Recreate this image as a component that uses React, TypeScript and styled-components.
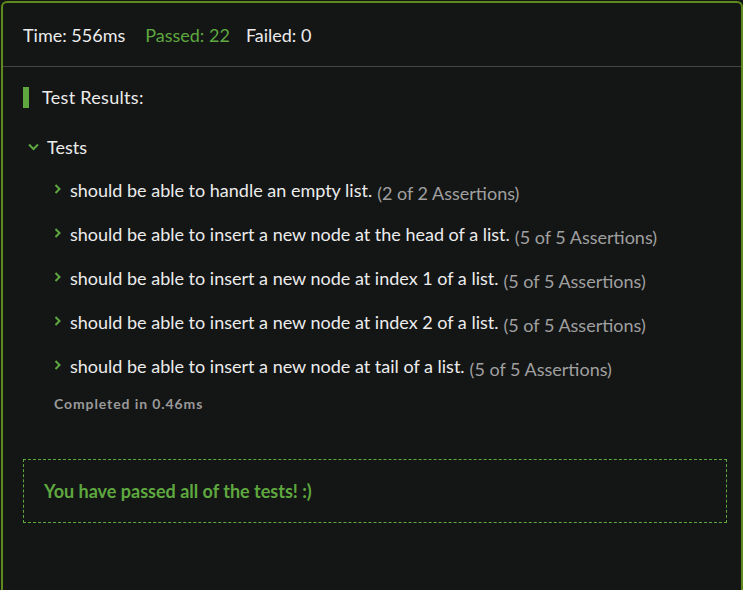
import React from "react";
import styled, { createGlobalStyle } from "styled-components";

const Global = createGlobalStyle`
  html, body { margin: 0; padding: 0; background: #141515; }
  body { font-family: Lato, "Noto Sans", sans-serif; color: #e8e8e8; }
`;

const Panel = styled.div`
  box-sizing: border-box;
  margin: 1px 0 0 1px;
  width: 742px;
  height: calc(100vh - 1px);
  overflow: hidden;
  border: 2px solid #5e8a1c;
  border-bottom: 0;
  border-radius: 6px 6px 0 0;
  background: #141515;
`;

const StatsBar = styled.div`
  display: flex;
  align-items: center;
  height: 63px;
  padding: 0 20px;
  border-bottom: 1px solid #454545;
  font-size: 18px;
`;

const Stat = styled.span<{ $pass?: boolean; $gap: number }>`
  color: ${(p) => (p.$pass ? "#5ea83f" : "#ececec")};
  margin-right: ${(p) => p.$gap}px;
`;

const Body = styled.div`
  padding: 19px 14px 0 20px;
`;

const Heading = styled.div`
  display: flex;
  align-items: center;
  gap: 13px;
  height: 22px;
  line-height: 22px;
  font-size: 18px;
  color: #ececec;
  letter-spacing: 0.3px;
`;

const Bar = styled.span`
  width: 6px;
  height: 21px;
  background: #5ea83f;
`;

const Group = styled.div`
  display: flex;
  align-items: center;
  gap: 8px;
  height: 22px;
  line-height: 22px;
  margin: 28px 0 0 5px;
  font-size: 18px;
  color: #ececec;
`;

const List = styled.ul`
  list-style: none;
  margin: 10px 0 0;
  padding: 0 0 0 31px;
`;

const Item = styled.li`
  display: flex;
  align-items: center;
  gap: 8px;
  height: 44px;
  font-size: 18px;
  color: #ececec;
`;

const Count = styled.span`
  color: #a0a0a0;
  margin-left: 5px;
  position: relative;
  top: 3px;
`;

const Completed = styled.div`
  margin: 7px 0 0 31px;
  font-size: 14px;
  line-height: 17px;
  font-weight: 700;
  color: #9a9a9a;
  letter-spacing: 0.9px;
`;

const Banner = styled.div`
  box-sizing: border-box;
  margin-top: 47px;
  height: 64px;
  display: flex;
  align-items: center;
  padding-left: 20px;
  border: 1px dashed #5ea83f;
  font-size: 18px;
  font-weight: 700;
  color: #5ea83f;
`;

const ChevronDown = () => (
  <svg width="11" height="8" viewBox="0 0 11 8">
    <path d="M1 1.5 L5.5 6 L10 1.5" fill="none" stroke="#5ea83f" strokeWidth="2" />
  </svg>
);

const ChevronRight = () => (
  <svg width="8" height="10" viewBox="0 0 8 10" style={{ marginTop: -2 }}>
    <path d="M1.5 1 L5.5 5 L1.5 9" fill="none" stroke="#5ea83f" strokeWidth="2" />
  </svg>
);

const tests = [
  ["should be able to handle an empty list.", "(2 of 2 Assertions)"],
  ["should be able to insert a new node at the head of a list.", "(5 of 5 Assertions)"],
  ["should be able to insert a new node at index 1 of a list.", "(5 of 5 Assertions)"],
  ["should be able to insert a new node at index 2 of a list.", "(5 of 5 Assertions)"],
  ["should be able to insert a new node at tail of a list.", "(5 of 5 Assertions)"],
];

export default function App() {
  return (
    <>
      <Global />
      <Panel>
        <StatsBar>
          <Stat $gap={20}>Time: 556ms</Stat>
          <Stat $pass $gap={16}>Passed: 22</Stat>
          <Stat $gap={0}>Failed: 0</Stat>
        </StatsBar>
        <Body>
          <Heading>
            <Bar />
            Test Results:
          </Heading>
          <Group>
            <ChevronDown />
            Tests
          </Group>
          <List>
            {tests.map(([name, count]) => (
              <Item key={name}>
                <ChevronRight />
                <span>
                  {name}
                  <Count>{count}</Count>
                </span>
              </Item>
            ))}
          </List>
          <Completed>Completed in 0.46ms</Completed>
          <Banner>You have passed all of the tests! :)</Banner>
        </Body>
      </Panel>
    </>
  );
}
